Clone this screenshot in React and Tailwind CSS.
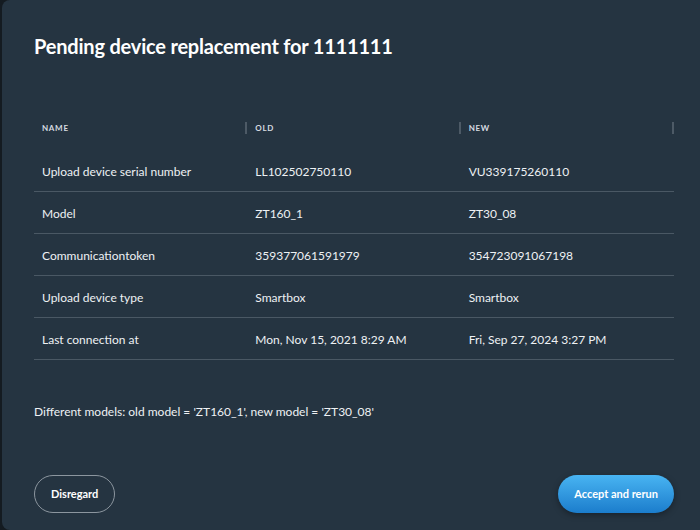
const rows = [
  ['Upload device serial number', 'LL102502750110', 'VU339175260110'],
  ['Model', 'ZT160_1', 'ZT30_08'],
  ['Communicationtoken', '359377061591979', '354723091067198'],
  ['Upload device type', 'Smartbox', 'Smartbox'],
  ['Last connection at', 'Mon, Nov 15, 2021 8:29 AM', 'Fri, Sep 27, 2024 3:27 PM'],
];

export default function App() {
  return (
    <div className="w-[700px] h-[530px] bg-[#141b21] pl-[2px] overflow-hidden" style={{ fontFamily: 'Lato, "Open Sans", sans-serif' }}>
      <div className="h-full bg-[#253441] rounded-tl-[8px] rounded-bl-[8px] pl-[32px] pr-[26px] flex flex-col">
        {/* Title */}
        <h2 className="text-[20px] font-bold text-white tracking-[-0.2px] mt-[33px] leading-[26px]">
          Pending device replacement for 1111111
        </h2>

        {/* Table */}
        <div className="mt-[47px]">
          <div className="grid grid-cols-3 h-[44px] items-center">
            {['Name', 'Old', 'New'].map((h) => (
              <div key={h} className="flex items-center justify-between pl-[8px]">
                <span className="text-[8px] font-bold uppercase tracking-[0.7px] text-[#d6dbe0]">{h}</span>
                <span className="w-[2px] h-[12px] bg-[#4d5a66]" />
              </div>
            ))}
          </div>
          {rows.map((r) => (
            <div key={r[0]} className="grid grid-cols-3 h-[42px] items-center border-b border-[#4a5864] text-[12px] text-[#eef1f4] pt-[2px]">
              {r.map((c, i) => (
                <div key={i} className="pl-[8px] truncate">{c}</div>
              ))}
            </div>
          ))}
        </div>

        <p className="mt-[43px] text-[12px] text-[#eef1f4]">
          Different models: old model = 'ZT160_1', new model = 'ZT30_08'
        </p>

        <div className="mt-auto mb-[17px] flex items-center justify-between">
          <button className="h-[38px] px-[16px] rounded-full border border-[#8c969f] text-white text-[11px] font-bold">
            Disregard
          </button>
          <button className="h-[38px] px-[16px] rounded-full bg-gradient-to-b from-[#48b4f2] to-[#1b7dcc] text-white text-[11px] font-bold shadow-[0_2px_6px_rgba(0,0,0,0.35)]">
            Accept and rerun
          </button>
        </div>
      </div>
    </div>
  );
}
